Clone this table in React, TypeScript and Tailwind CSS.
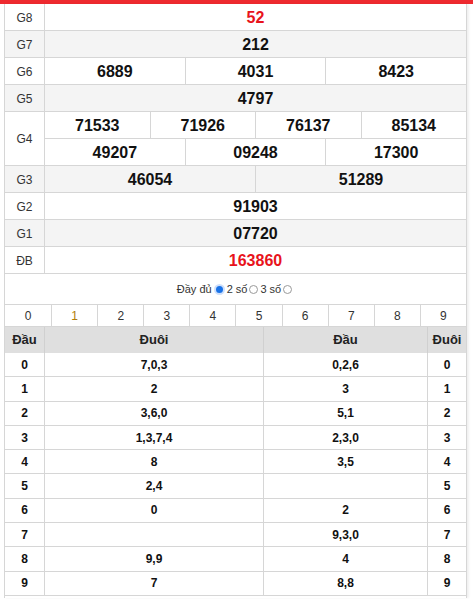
import React from 'react';

type Prize = { label: string; rows: string[][]; red?: boolean };

const PRIZES: Prize[] = [
  { label: 'G8', rows: [['52']], red: true },
  { label: 'G7', rows: [['212']] },
  { label: 'G6', rows: [['6889', '4031', '8423']] },
  { label: 'G5', rows: [['4797']] },
  { label: 'G4', rows: [['71533', '71926', '76137', '85134'], ['49207', '09248', '17300']] },
  { label: 'G3', rows: [['46054', '51289']] },
  { label: 'G2', rows: [['91903']] },
  { label: 'G1', rows: [['07720']] },
  { label: 'ĐB', rows: [['163860']], red: true },
];

const LOTO: [string, string, string, string][] = [
  ['0', '7,0,3', '0,2,6', '0'],
  ['1', '2', '3', '1'],
  ['2', '3,6,0', '5,1', '2'],
  ['3', '1,3,7,4', '2,3,0', '3'],
  ['4', '8', '3,5', '4'],
  ['5', '2,4', '', '5'],
  ['6', '0', '2', '6'],
  ['7', '', '9,3,0', '7'],
  ['8', '9,9', '4', '8'],
  ['9', '7', '8,8', '9'],
];

function Radio({ checked }: { checked?: boolean }) {
  return checked ? (
    <span className="inline-block w-[7px] h-[7px] rounded-full bg-[#1a73e8] border-[2px] border-[#cfe0fb] box-content mx-[2px]" />
  ) : (
    <span className="inline-block w-[9px] h-[9px] rounded-full border border-[#9a9a9a] bg-white mx-[2px]" />
  );
}

export default function App() {
  return (
    <div className="w-[473px] h-[599px] bg-white font-['Liberation_Sans',Arial,sans-serif] text-[#222] overflow-hidden">
      <div className="h-[4px] bg-[#ee2a2f]" />
      <div className="ml-[4px] w-[463px] border-x border-[#d6d6d6] shadow-[2px_0_2px_rgba(0,0,0,0.06)] pb-[2px]">
        {/* Prize table */}
        {PRIZES.map((p, i) => (
          <div key={p.label} className={`flex border-b border-[#d6d6d6] ${i % 2 === 1 ? 'bg-[#f4f4f4]' : 'bg-white'}`}>
            <div className="w-[40px] shrink-0 border-r border-[#d6d6d6] flex items-center justify-center text-[12px] text-[#333] pt-[1px]">
              {p.label}
            </div>
            <div className="flex-1 flex flex-col">
              {p.rows.map((row, ri) => (
                <div key={ri} className={ri < p.rows.length - 1 ? 'flex h-[27px] border-b border-[#d6d6d6]' : 'flex h-[26px]'}>
                  {row.map((n, ci) => (
                    <div
                      key={ci}
                      className={`flex-1 flex items-center justify-center pt-[2px] text-[16px] font-bold ${ci > 0 ? 'border-l border-[#d6d6d6]' : ''} ${p.red ? 'text-[#e8131b]' : 'text-[#111]'}`}
                    >
                      {n}
                    </div>
                  ))}
                </div>
              ))}
            </div>
          </div>
        ))}

        {/* Options */}
        <div className="h-[30px] flex items-center justify-center text-[11px] text-[#333] pt-[1px]">
          <span>Đầy đủ</span>
          <Radio checked />
          <span>2 số</span>
          <Radio />
          <span>3 số</span>
          <Radio />
        </div>

        {/* Digit row */}
        <div className="grid grid-cols-10 h-[23px] border-y border-[#d6d6d6] text-[12px]">
          {['0', '1', '2', '3', '4', '5', '6', '7', '8', '9'].map((d, i) => (
            <div
              key={d}
              className={`flex items-center justify-center ${i > 0 ? 'border-l border-[#d6d6d6]' : ''} ${i === 1 ? 'text-[#b07d0a]' : 'text-[#333]'}`}
            >
              {d}
            </div>
          ))}
        </div>

        {/* Loto header */}
        <div className="flex h-[26px] bg-[#dfdfdf] text-[13px] font-bold text-[#222]">
          <div className="w-[40px] flex items-center justify-center border-r border-[#d0d0d0]">Đầu</div>
          <div className="w-[219px] flex items-center justify-center border-r border-[#d0d0d0]">Đuôi</div>
          <div className="w-[164px] flex items-center justify-center border-r border-[#d0d0d0]">Đầu</div>
          <div className="flex-1 flex items-center justify-center">Đuôi</div>
        </div>

        {/* Loto rows */}
        {LOTO.map((r) => (
          <div key={r[0]} className="flex h-[24.3px] border-b border-[#d6d6d6] text-[12px] font-bold text-[#111]">
            <div className="w-[40px] flex items-center justify-center border-r border-[#d6d6d6]">{r[0]}</div>
            <div className="w-[219px] flex items-center justify-center border-r border-[#d6d6d6]">{r[1]}</div>
            <div className="w-[164px] flex items-center justify-center border-r border-[#d6d6d6]">{r[2]}</div>
            <div className="flex-1 flex items-center justify-center">{r[3]}</div>
          </div>
        ))}
      </div>
    </div>
  );
}
